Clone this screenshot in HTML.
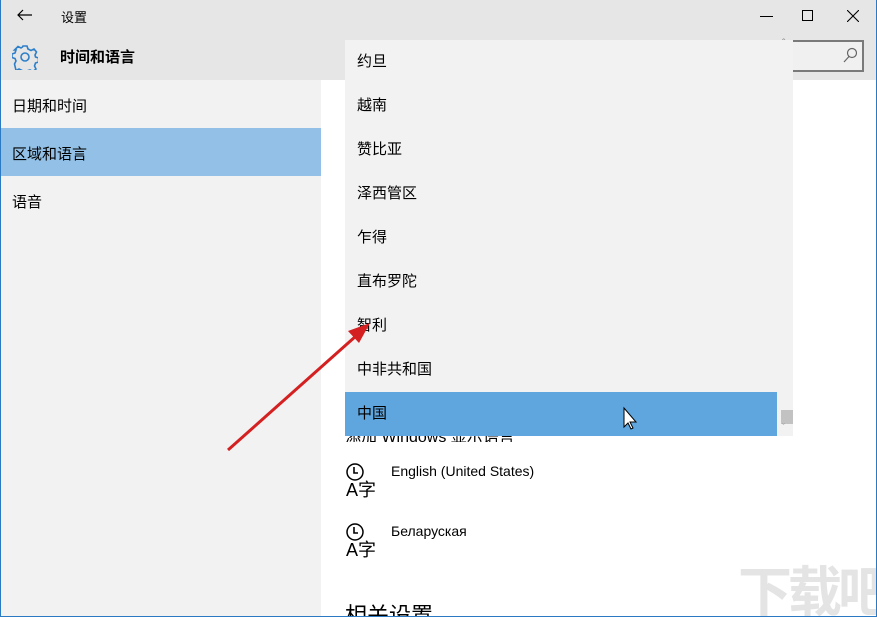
<!DOCTYPE html>
<html><head><meta charset="utf-8"><style>
*{margin:0;padding:0;box-sizing:border-box}
html,body{width:877px;height:617px;overflow:hidden}
body{background:#fff;font-family:"Liberation Sans","Noto Sans CJK SC",sans-serif;position:relative;font-size:15px;color:#000}
.a{position:absolute;white-space:nowrap}
.it{position:absolute;left:357px;font-size:15px;line-height:20px}
</style></head><body>
<div class="a" style="left:0;top:0;width:877px;height:80px;background:#e6e6e6"></div>
<div class="a" style="left:0;top:80px;width:321px;height:537px;background:#f2f2f2"></div>
<div class="a" style="left:0;top:128px;width:321px;height:48px;background:#92c0e6"></div>
<svg class="a" style="left:17px;top:9px" width="16" height="12" viewBox="0 0 16 12"><path d="M1 6h14M6 1L1 6l5 5" fill="none" stroke="#000" stroke-width="1.2"/></svg>
<div class="a" style="left:61px;top:7px;font-size:13px">设置</div>
<svg class="a" style="left:12px;top:44px" width="26" height="26" viewBox="0 0 26 26"><g fill="none" stroke="#2d7fc9" stroke-width="1.6"><circle cx="13" cy="13" r="4"/><path d="M11 2h4l1 3 3 1.5 3-1.5 2.5 3-1.5 3 .5 2 3 1v4l-3 1-1 3 1.5 3-3 2.5-3-1.5-2 .5-1 3h-4l-1-3-3-1.5-3 1.5L2.5 20l1.5-3-1-2.5-3-1V10l3-1 1-3L2.5 6 6 2.5 9 4l1.5-1z"/></g></svg>
<div class="a" style="left:60px;top:46px;font-size:15px;font-weight:bold">时间和语言</div>
<div class="a" style="left:12px;top:95px">日期和时间</div>
<div class="a" style="left:12px;top:143px">区域和语言</div>
<div class="a" style="left:12px;top:191px">语音</div>
<div class="a" style="left:760px;top:16px;width:13px;height:1px;background:#000"></div>
<div class="a" style="left:802px;top:10px;width:11px;height:11px;border:1px solid #000"></div>
<svg class="a" style="left:847px;top:10px" width="12" height="12"><path d="M0 0L12 12M12 0L0 12" stroke="#000" stroke-width="1.1"/></svg>
<div class="a" style="left:780px;top:40px;width:84px;height:32px;border:2px solid #7a7a7a;background:#f0f0f0"></div>
<svg class="a" style="left:843px;top:47px" width="14" height="16"><circle cx="9" cy="6" r="4.5" fill="none" stroke="#666" stroke-width="1.2"/><path d="M6 9.5L1 15" stroke="#666" stroke-width="1.2"/></svg>
<div class="a" style="left:345px;top:40px;width:448px;height:396px;background:#f2f2f2"></div>
<div class="a" style="left:345px;top:392px;width:432px;height:44px;background:#5fa6de"></div>
<div class="a" style="left:781px;top:410px;width:12px;height:14px;background:#c2c2c2"></div>
<div class="a" style="left:782px;top:38px;font-size:10px;color:#888">ˆ</div>
<div class="a" style="left:782px;top:422px;font-size:9px;color:#999">ˇ</div>
<div class="it" style="top:52px">约旦</div>
<div class="it" style="top:96px">越南</div>
<div class="it" style="top:140px">赞比亚</div>
<div class="it" style="top:184px">泽西管区</div>
<div class="it" style="top:228px">乍得</div>
<div class="it" style="top:272px">直布罗陀</div>
<div class="it" style="top:316px">智利</div>
<div class="it" style="top:360px">中非共和国</div>
<div class="it" style="top:404px">中国</div>
<div class="a" style="left:345px;top:436px;width:200px;height:6px;overflow:hidden"><div style="margin-top:-13px;font-size:16px">添加 Windows 显示语言</div></div>
<div class="a" style="left:345px;top:462px;width:36px;height:40px"><svg width="36" height="20"><circle cx="10" cy="10" r="8" fill="none" stroke="#000" stroke-width="1.5"/><path d="M9 5v6h4" fill="none" stroke="#000" stroke-width="1.6"/></svg><div class="a" style="left:1px;top:18px;font-size:18px;line-height:20px">A字</div></div>
<div class="a" style="left:391px;top:463px;font-size:14px">English (United States)</div>
<div class="a" style="left:345px;top:522px;width:36px;height:40px"><svg width="36" height="20"><circle cx="10" cy="10" r="8" fill="none" stroke="#000" stroke-width="1.5"/><path d="M9 5v6h4" fill="none" stroke="#000" stroke-width="1.6"/></svg><div class="a" style="left:1px;top:18px;font-size:18px;line-height:20px">A字</div></div>
<div class="a" style="left:391px;top:523px;font-size:14px">Беларуская</div>
<div class="a" style="left:345px;top:601px;font-size:22px;line-height:30px">相关设置</div>
<div class="a" style="left:738px;top:548px;font-size:54px;color:#e4e4e4;font-weight:bold;letter-spacing:-4px">下载吧</div>
<svg class="a" style="left:0;top:0" width="877" height="617"><line x1="228" y1="450" x2="356" y2="336" stroke="#d42020" stroke-width="3"/><polygon points="370,323 348,331 359,343" fill="#d42020"/>
<path d="M624 408v19l4-4 3 6 2-1-3-6h6z" fill="#fff" stroke="#000" stroke-width="1"/></svg>
<div class="a" style="left:0;top:0;width:877px;height:617px;border:1px solid #2b79c2;border-top:none"></div>
</body></html>
